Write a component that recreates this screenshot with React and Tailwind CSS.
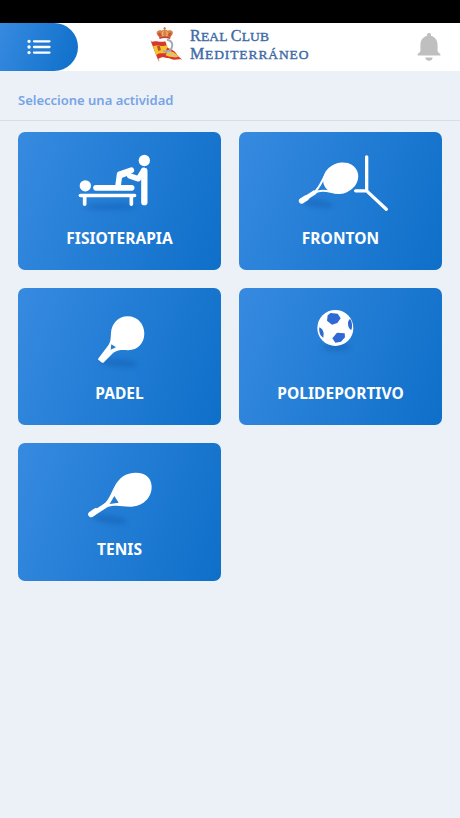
function MenuIcon() {
  return (
    <svg viewBox="0 0 24 16" className="h-4 w-6" fill="none" stroke="white" strokeWidth="2.3" strokeLinecap="round">
      <path d="M7 2.3h15.5M7 8h15.5M7 13.6h15.5" />
      <path d="M2 2.3h.1M2 8h.1M2 13.6h.1" strokeWidth="3.3" />
    </svg>
  )
}

function BellIcon() {
  return (
    <svg viewBox="0 0 72 88" className="h-[29px] w-6" fill="#bfbfbf">
      <path d="M30 7a6.5 6.5 0 0 1 12 0v4c14 4 20 15 20 29v18c0 5 9 7 9 11 0 2-1 2-3 2H4c-2 0-3 0-3-2 0-4 9-6 9-11V40c0-14 6-25 20-29z" />
      <path d="M25 77h22c0 6-5 10-11 10s-11-4-11-10z" />
    </svg>
  )
}

function Crest() {
  return (
    <svg viewBox="0 0 135 135" className="h-[45px] w-[45px]">
      <path d="M18 53l24 62" stroke="#c99a86" strokeWidth="3" />
      <path d="M19 57c14-7 24 3 42-2l16 46c-14 7-24-5-38 8z" fill="#d9372c" />
      <path d="M24 70c14-7 24 3 42-3l8 22c-14 6-27-4-41 7z" fill="#f6c52c" />
      <path d="M66 74c14 5 24 8 32 24l14 12c-14-4-22 4-34-2-8-4-13-2-19-6z" fill="#d9372c" />
      <path d="M68 82c14 3 25 8 32 20-14 2-24 1-38-5z" fill="#f6c52c" />
      <path d="M66 50c15 2 19 15 14 25-4 9-14 13-26 9" fill="none" stroke="#a5a9b3" strokeWidth="6" />
      <path d="M67 87c7 2 16 9 26 14" fill="none" stroke="#bec0c8" strokeWidth="4" />
      <path d="M36 70l8-2 4 13-8 3z" fill="#b8503a" />
      <path d="M44 44c-5-7-12-11-8-18 4-5 10-5 15-3 3-4 14-4 17 0 5-2 12-2 15 3 3 7-4 11-8 18z" fill="#d98243" />
      <path d="M43 41c-4-5-5-9-2-12 4-2 7 2 9 10m18 0c2-8 6-12 10-10 3 3 1 7-3 12" fill="#c9523a" />
      <path d="M54 39c-3-8-1-13 2-14m7 0c4 3 5 8 2 14" fill="none" stroke="#f2c583" strokeWidth="3" />
      <path d="M43 46c10-4 23-4 33 0" fill="none" stroke="#c0402f" strokeWidth="5" />
      <path d="M59 12v10M55 16h8" stroke="#c87b4c" strokeWidth="3" />
    </svg>
  )
}

function Shadow({ cx, cy, rx, ry, rotate = 0 }) {
  return (
    <ellipse
      cx={cx}
      cy={cy}
      rx={rx}
      ry={ry}
      transform={`rotate(${rotate} ${cx} ${cy})`}
      fill="#0b4fa0"
      opacity="0.34"
      className="blur-[8px]"
    />
  )
}

function Massage() {
  return (
    <g transform="translate(42 8.2) scale(.33333)" fill="none" stroke="white" strokeLinecap="round" strokeLinejoin="round">
      <g stroke="none">
        <Shadow cx={150} cy={200} rx={78} ry={9} />
      </g>
      <circle cx="76" cy="137" r="17" fill="white" stroke="none" />
      <circle cx="253" cy="61" r="17" fill="white" stroke="none" />
      <path d="M108 143h107" strokeWidth="17" />
      <path d="M61 166h163" strokeWidth="10" />
      <path d="M74 168v24M214 168v24" strokeWidth="11" />
      <path d="M253 92v94" strokeWidth="19" />
      <path d="M174 138l5-36 35-12" strokeWidth="17" />
      <path d="M182 105l22-8" strokeWidth="18" />
      <path d="M251 90l-16 26-26-9" strokeWidth="16" />
    </g>
  )
}

function Fronton() {
  return (
    <g transform="translate(41 8.2) scale(.33333)">
      <Shadow cx={112} cy={190} rx={48} ry={12} rotate={8} />
      <path d="M66 181l40-26" stroke="white" strokeWidth="13" />
      <path d="M65 182l14-9" stroke="white" strokeWidth="17" strokeLinecap="round" />
      <path d="M103 156c16-13 21-31 34-54M104 157c22-10 40-3 66 1" fill="none" stroke="white" strokeWidth="6" />
      <ellipse cx="182" cy="114" rx="54" ry="46" transform="rotate(-24 182 114)" fill="white" />
      <path d="M260 50v102M227 152h33l59 55" fill="none" stroke="white" strokeWidth="10" strokeLinecap="round" strokeLinejoin="round" />
    </g>
  )
}

function Padel() {
  return (
    <g transform="translate(42 12.2) scale(.33333)">
      <Shadow cx={176} cy={188} rx={56} ry={12} rotate={5} />
      <path
        fillRule="evenodd"
        fill="white"
        d="M115 175l30-40c8-11 7-24 8-37 2-29 22-50 50-50 31 0 50 24 50 52 0 30-21 51-50 50-16-1-31-1-43 8l-29 29q-3 2-6 0l-10-8q-2-2 0-4zM154 132l-2 17 16-8z"
      />
    </g>
  )
}

function Ball() {
  return (
    <g transform="translate(31 12) scale(.33333)">
      <Shadow cx={200} cy={141} rx={42} ry={12} />
      <circle cx="196" cy="84" r="54" fill="white" />
      <g fill="#2f69d2">
        <path d="M182 39l21 2 9 14-10 14-16 5-15-12 2-16z" />
        <path d="M201 98l23 2 1 12-12 13-17 3-9-13z" />
        <path d="M148 82c7 2 12 11 13 18l-1 13c-9-4-14-17-12-31z" />
        <path d="M240 57c6 5 8 22 4 33-7-2-10-11-10-20 0-5 2-10 6-13z" />
      </g>
    </g>
  )
}

function Tennis() {
  return (
    <g transform="translate(42 17) scale(.33333)">
      <Shadow cx={148} cy={178} rx={54} ry={12} rotate={8} />
      <path d="M94 164l44-28" stroke="white" strokeWidth="14" />
      <path d="M93 163l14-10" stroke="white" strokeWidth="17" strokeLinecap="round" />
      <path
        fillRule="evenodd"
        fill="white"
        d="M130 134c17-14 23-35 34-55 13-26 34-41 63-41 32 0 48 18 48 42 0 35-28 60-66 60-26 0-46-8-76 5zM163 108l-14 24 27-4z"
      />
    </g>
  )
}

const activities = [
  { name: 'FISIOTERAPIA', Icon: Massage },
  { name: 'FRONTON', Icon: Fronton },
  { name: 'PADEL', Icon: Padel },
  { name: 'POLIDEPORTIVO', Icon: Ball },
  { name: 'TENIS', Icon: Tennis },
]

function ActivityCard({ name, Icon }) {
  return (
    <button className="flex h-[137.5px] flex-col items-center overflow-hidden rounded-[7px] bg-linear-[110deg] from-[#378ae0] to-[#0e6fc9]">
      <svg viewBox="0 0 203 93.4" className="h-[93.4px] w-[203px] shrink-0">
        <Icon />
      </svg>
      <span className="text-[15.5px] leading-6 font-bold tracking-[0.05px] whitespace-nowrap text-white">{name}</span>
    </button>
  )
}

export default function App() {
  return (
    <div className="flex h-screen w-full flex-col overflow-hidden bg-[#ecf1f8] font-['Noto_Sans','Open_Sans',sans-serif]">
      <div className="h-[22.5px] shrink-0 bg-black" />
      <header className="flex h-[48.5px] shrink-0 items-center bg-white">
        <button className="flex h-full w-[78px] items-center justify-center rounded-r-full bg-linear-[110deg] from-[#378ae0] to-[#0e6fc9]">
          <MenuIcon />
        </button>
        <div className="ml-[67px] flex items-center pb-[3px]">
          <Crest />
          <div className="font-['Liberation_Serif',serif] text-[13.5px] leading-[17px] whitespace-nowrap text-[#3e6ba5] [-webkit-text-stroke:0.4px_#3e6ba5]">
            <div className="tracking-[0.2px]">
              <span className="text-[16px]">R</span>EAL <span className="text-[16px]">C</span>LUB
            </div>
            <div className="tracking-[0.88px]">
              <span className="text-[16px]">M</span>EDITERRÁNEO
            </div>
          </div>
        </div>
        <button className="mr-[19px] ml-auto">
          <BellIcon />
        </button>
      </header>
      <div className="flex h-[50px] shrink-0 items-center border-b border-[#d6dde8] px-[18px] pt-2">
        <h1 className="text-[13px] leading-5 font-semibold text-[#76a4e5]">Seleccione una actividad</h1>
      </div>
      <main className="grid grid-cols-2 gap-[18px] px-[18px] pt-[11.3px]">
        {activities.map((a) => (
          <ActivityCard key={a.name} {...a} />
        ))}
      </main>
    </div>
  )
}
